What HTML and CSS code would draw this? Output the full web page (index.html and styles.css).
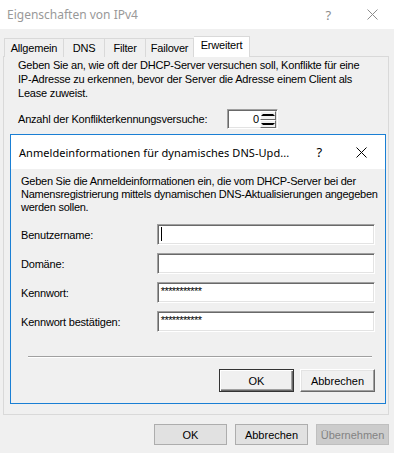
FILE: index.html
```html
<!DOCTYPE html>
<html lang="de">
<head>
  <meta charset="UTF-8">
  <title>Eigenschaften von IPv4</title>
  <link rel="stylesheet" href="styles.css">
</head>
<body>

  <div class="titlebar">
    <span class="title">Eigenschaften von IPv4</span>
    <span class="tb-help">?</span>
    <svg class="tb-close" width="11" height="11" viewBox="0 0 11 11"><path d="M0.5 0.5L10.5 10.5M10.5 0.5L0.5 10.5" stroke="#8c8c8c" stroke-width="1"/></svg>
  </div>

  <div class="client">
    <div class="tabs">
      <div class="tab first">Allgemein</div>
      <div class="tab dns">DNS</div>
      <div class="tab filter">Filter</div>
      <div class="tab failover">Failover</div>
      <div class="tab active">Erweitert</div>
    </div>

    <div class="panel">
      <p class="panel-text">Geben Sie an, wie oft der DHCP-Server versuchen soll, Konflikte für eine<br>IP-Adresse zu erkennen, bevor der Server die Adresse einem Client als<br>Lease zuweist.</p>

      <div class="spin-row">
        <span>Anzahl der Konflikterkennungsversuche:</span>
        <div class="spin">
          <div class="spin-val">0</div>
          <div class="spin-btns">
            <div class="spin-btn"><span class="tri up"></span></div>
            <div class="spin-btn"><span class="tri down"></span></div>
          </div>
        </div>
      </div>

      <!-- Anmeldedialog liegt über dem Register -->
      <div class="dialog">
        <div class="dlg-titlebar">
          <span class="dlg-title">Anmeldeinformationen für dynamisches DNS-Upd...</span>
          <span class="dlg-help">?</span>
          <svg class="dlg-close" width="11" height="11" viewBox="0 0 11 11"><path d="M0.5 0.5L10.5 10.5M10.5 0.5L0.5 10.5" stroke="#000" stroke-width="1"/></svg>
        </div>
        <div class="dlg-body">
          <p class="dlg-text">Geben Sie die Anmeldeinformationen ein, die vom DHCP-Server bei der<br>Namensregistrierung mittels dynamischen DNS-Aktualisierungen angegeben<br>werden sollen.</p>

          <div class="fields">
            <div class="field">
              <span class="label">Benutzername:</span>
              <div class="edit"><span class="caret"></span></div>
            </div>
            <div class="field">
              <span class="label">Domäne:</span>
              <div class="edit"></div>
            </div>
            <div class="field">
              <span class="label">Kennwort:</span>
              <div class="edit pw">***********</div>
            </div>
            <div class="field">
              <span class="label">Kennwort bestätigen:</span>
              <div class="edit pw">***********</div>
            </div>
          </div>

          <div class="separator"></div>

          <div class="dlg-buttons">
            <button class="btn-classic default">OK</button>
            <button class="btn-classic">Abbrechen</button>
          </div>
        </div>
      </div>
    </div>

    <div class="buttons">
      <button class="btn">OK</button>
      <button class="btn">Abbrechen</button>
      <button class="btn" disabled>Übernehmen</button>
    </div>
  </div>

  <div class="bottom-line"></div>

</body>
</html>
```

FILE: styles.css
```css
body {
  margin: 0;
  width: 394px;
  height: 453px;
  overflow: hidden;
  background: #f0f0f0;
  font-family: "Liberation Sans", Arial, sans-serif;
  font-size: 11px;
  letter-spacing: -0.2px;
  color: #000;
}

p {
  margin: 0;
  white-space: nowrap;
}

/* Fenstertitel */
.titlebar {
  height: 29px;
  background: #fff;
  display: flex;
  align-items: center;
}

.title {
  font-family: "Noto Sans", sans-serif;
  font-size: 12px;
  letter-spacing: 0;
  color: #999;
  margin-left: 7px;
  flex: 1;
}

.tb-help {
  font-family: "Noto Sans", sans-serif;
  font-size: 13px;
  color: #8c8c8c;
  margin-right: 36px;
}

.tb-close {
  margin-right: 16px;
}

.client {
  padding: 7px 5px 0 3px;
}

/* Registerkarten */
.tabs {
  display: flex;
  align-items: flex-end;
  margin-bottom: -1px;
  padding-left: 1px;
}

.tab {
  width: 40px;
  height: 18px;
  line-height: 18px;
  text-align: center;
  border: 1px solid #d9d9d9;
  border-left: none;
  border-bottom: none;
  background: #f0f0f0;
}

.tab.first {
  width: 58px;
  border-left: 1px solid #d9d9d9;
}

.tab.failover {
  width: 47px;
}

.tab.active {
  position: relative;
  z-index: 1;
  width: 55px;
  height: 20px;
  line-height: 17px;
  background: #fff;
}

.panel {
  border: 1px solid #d9d9d9;
  background: #f0f0f0;
  padding: 1px 1px 10px 3px;
}

.panel-text {
  line-height: 14px;
  margin-left: 11px;
}

.spin-row {
  display: flex;
  align-items: center;
  margin: 9px 0 0 11px;
}

.spin-row span {
  width: 209px;
}

.spin {
  display: flex;
  width: 51px;
  height: 20px;
  box-sizing: border-box;
  background: #fff;
  border-top: 1px solid #a0a0a0;
  border-left: 1px solid #a0a0a0;
  border-bottom: 1px solid #fff;
  border-right: 1px solid #fff;
  box-shadow: inset 1px 1px 0 #696969, inset -1px -1px 0 #e3e3e3;
}

.spin-val {
  flex: 1;
  text-align: right;
  line-height: 18px;
  padding-right: 1px;
}

.spin-btns {
  display: flex;
  flex-direction: column;
  width: 16px;
  padding: 1px 1px 0 0;
}

.spin-btn {
  height: 9px;
  box-sizing: border-box;
  background: #f0f0f0;
  border: 1px solid;
  border-color: #fff #696969 #696969 #fff;
  display: flex;
  align-items: center;
  justify-content: center;
}

.tri {
  width: 0;
  height: 0;
  border-left: 2px solid transparent;
  border-right: 2px solid transparent;
}

.tri.up {
  border-bottom: 2px solid #000;
}

.tri.down {
  border-top: 2px solid #000;
}

/* Anmeldedialog */
.dialog {
  margin: 5px 1px 0 3px;
  border: 1px solid #1a7fd4;
  background: #f0f0f0;
}

.dlg-titlebar {
  height: 34px;
  background: #fff;
  display: flex;
  align-items: center;
}

.dlg-title {
  font-family: "Noto Sans", sans-serif;
  font-size: 11px;
  letter-spacing: 0.05px;
  margin-left: 8px;
  flex: 1;
}

.dlg-help {
  font-family: "Noto Sans", sans-serif;
  font-size: 13px;
  margin-right: 34px;
}

.dlg-close {
  margin-right: 18px;
}

.dlg-body {
  padding: 6px 10px 11px 10px;
}

.dlg-text {
  line-height: 13px;
  letter-spacing: -0.25px;
}

.fields {
  display: flex;
  flex-direction: column;
  gap: 8px;
  margin-top: 10px;
}

.field {
  display: flex;
  align-items: center;
}

.label {
  width: 137px;
}

.edit {
  width: 220px;
  height: 21px;
  box-sizing: border-box;
  background: #fff;
  border-top: 1px solid #a0a0a0;
  border-left: 1px solid #a0a0a0;
  border-bottom: 1px solid #fff;
  border-right: 1px solid #fff;
  box-shadow: inset 1px 1px 0 #696969, inset -1px -1px 0 #e3e3e3;
  padding: 2px 3px;
}

.caret {
  display: block;
  width: 1px;
  height: 14px;
  background: #000;
}

.edit.pw {
  font-size: 11px;
  line-height: 10px;
  letter-spacing: -0.6px;
  padding-top: 3px;
}

.separator {
  margin: 24px 3px 0 7px;
  border-top: 1px solid #a0a0a0;
  border-bottom: 1px solid #fff;
}

.dlg-buttons {
  display: flex;
  justify-content: flex-end;
  gap: 6px;
  margin-top: 11px;
}

.btn-classic {
  width: 75px;
  height: 23px;
  font-family: "Liberation Sans", Arial, sans-serif;
  font-size: 11px;
  color: #000;
  background: #f0f0f0;
  border: 1px solid;
  border-color: #fff #696969 #696969 #fff;
  box-shadow: inset -1px -1px 0 #a0a0a0, inset 1px 1px 0 #e3e3e3;
  padding: 0;
}

.btn-classic.default {
  border: 1px solid #333;
  box-shadow: inset 1px 1px 0 #fff, inset -1px -1px 0 #696969, inset -2px -2px 0 #a0a0a0;
}

/* untere Schaltflächen */
.buttons {
  display: flex;
  justify-content: flex-end;
  gap: 8px;
  margin-top: 9px;
}

.btn {
  width: 73px;
  height: 21px;
  font-family: "Liberation Sans", Arial, sans-serif;
  font-size: 11px;
  color: #000;
  background: #e1e1e1;
  border: 1px solid #adadad;
  padding: 0;
}

.btn:disabled {
  background: #cccccc;
  border-color: #bfbfbf;
  color: #838383;
}

.bottom-line {
  margin-top: 8px;
  height: 1px;
  background: #8a8a8a;
}
```
